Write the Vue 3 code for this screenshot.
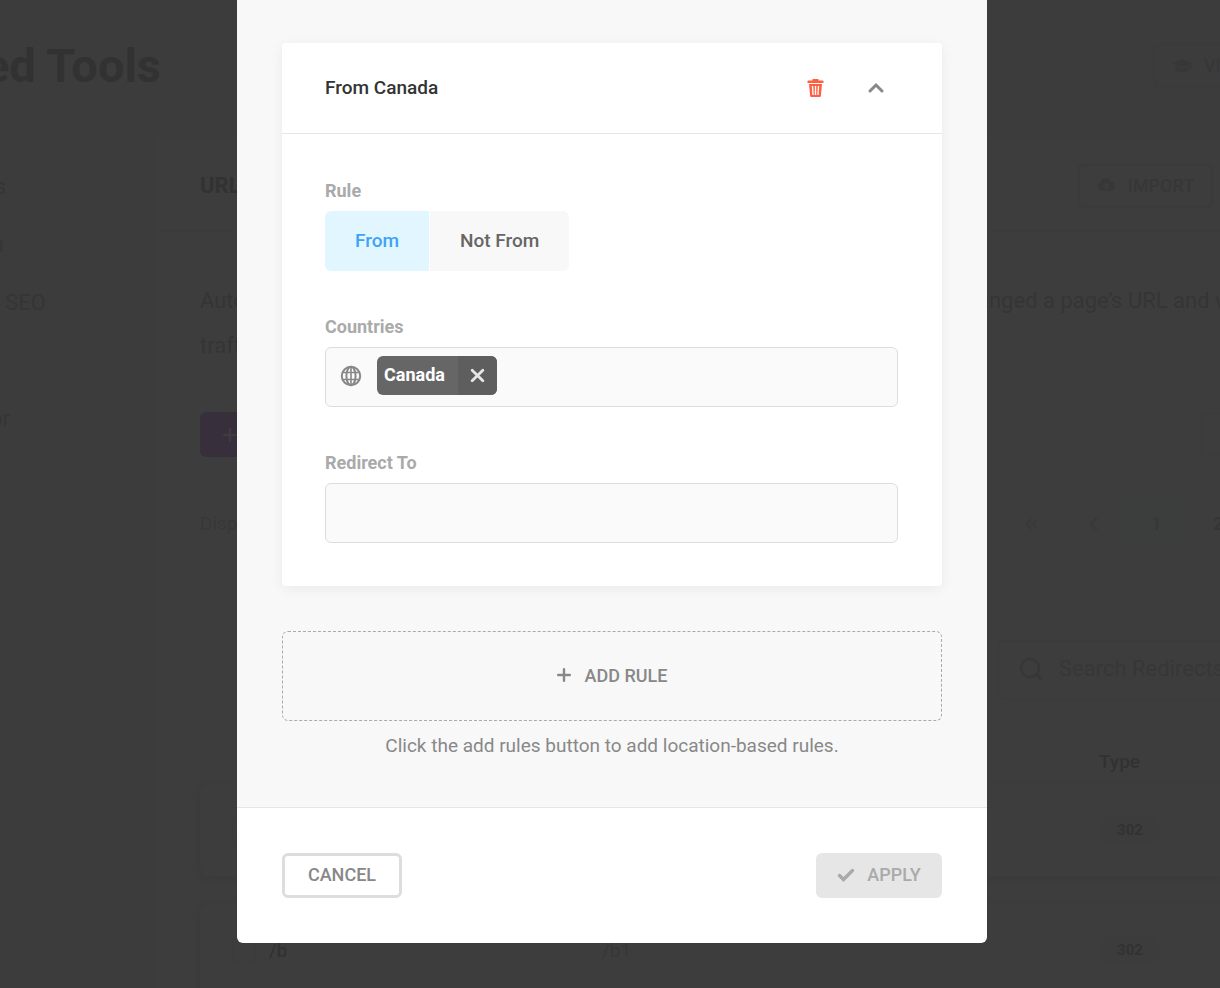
<script setup>
import { ref } from 'vue'

const rule = ref('from')
const redirectTo = ref('')
const countries = ref(['Canada'])

const navItems = [
  { text: 's', visible: 6 },
  { text: 'n', visible: 4 },
  { text: 'SEO', visible: 46 },
  { text: '', visible: 0 },
  { text: 'or', visible: 10 },
]

const rows = [
  { from: '', to: '', type: '302' },
  { from: '/b', to: '/b1', type: '302' },
]

function removeCountry(name) {
  countries.value = countries.value.filter((c) => c !== name)
}
</script>

<template>
  <div class="stage">
    <div class="page" aria-hidden="true">
      <header class="page-head">
        <h1 class="page-title"><span>ed Tools</span></h1>
        <button class="ghost video" type="button" tabindex="-1">
          <svg width="20" height="16" viewBox="0 0 20 16"><path d="M10 1 0.500 5.200 10 9.500l7.500-3.400V11h1.700V5.200zM3.500 8v3.500C5 13.500 7.300 14.300 10 14.300s5-.8 6.200-2.800V8L10 10.900z" fill="currentColor"/></svg>
          <span>VI</span>
        </button>
      </header>
      <div class="page-cols">
        <ul class="side">
          <li v-for="(item, i) in navItems" :key="i" :style="{ width: item.visible + 'px' }">{{ item.text }}</li>
        </ul>
        <section class="panel">
          <div class="panel-head">
            <h2>URL</h2>
            <button class="ghost import" type="button" tabindex="-1">
              <svg width="19" height="14" viewBox="0 0 19 14"><path fill-rule="evenodd" d="M4.500 12.500A4 4 0 0 1 3.300 4.700 5.500 5.500 0 0 1 13.800 3.500 4.600 4.600 0 0 1 14.500 12.500zM9.500 4.500 5.700 8.500h2.300v3h3v-3h2.300z" fill="currentColor"/></svg>
              <span>IMPORT</span>
            </button>
          </div>
          <div class="intro">
            <p>Auto<br />traff</p>
            <p class="intro-end">anged a page’s URL and w</p>
          </div>
          <div class="actions">
            <button class="add" type="button" tabindex="-1">
              <svg width="14" height="14" viewBox="0 0 14 14"><path d="M7 1v12M1 7h12" stroke="currentColor" stroke-width="2.500" stroke-linecap="round"/></svg>
            </button>
            <span class="stub"></span>
          </div>
          <div class="paging">
            <span class="display">Disp</span>
            <div class="pager">
              <span class="dim"><svg width="14" height="14" viewBox="0 0 14 14"><path d="M6.500 2 1.500 7l5 5M12.500 2l-5 5 5 5" fill="none" stroke="currentColor" stroke-width="2"/></svg></span>
              <span class="dim"><svg width="14" height="14" viewBox="0 0 14 14"><path d="M10 1 4 7l6 6" fill="none" stroke="currentColor" stroke-width="2"/></svg></span>
              <span class="current">1</span>
              <span>2</span>
            </div>
          </div>
          <div class="search">
            <svg width="24" height="24" viewBox="0 0 24 24"><circle cx="11" cy="11" r="9" fill="none" stroke="currentColor" stroke-width="2.500"/><path d="m17 17 5.500 5.500" stroke="currentColor" stroke-width="3"/></svg>
            <span>Search Redirects</span>
          </div>
          <div class="list-head">Type</div>
          <div v-for="(row, i) in rows" :key="i" class="list-row">
            <i class="tick"></i>
            <span class="path">{{ row.from }}</span>
            <span class="dest">{{ row.to }}</span>
            <b class="badge">{{ row.type }}</b>
          </div>
        </section>
      </div>
    </div>

    <div class="layer">
      <div class="modal" role="dialog" aria-modal="true" aria-label="Location rules">
        <div class="modal-body">
          <section class="card">
            <header class="card-head">
              <h3>From Canada</h3>
              <button class="icon-btn trash" type="button" aria-label="Delete rule">
                <svg width="17" height="20" viewBox="0 0 17 20"><path fill-rule="evenodd" d="M5.500 1h6v1.500h4.200q.8 0 .8.800V5H.5V3.300q0-.8.800-.8h4.200zM2 6h13l-1.200 12.200q-.1.800-.9.800H4.100q-.8 0-.9-.8zM4.800 8l.6 9h1.300l-.5-9zm3 0v9h1.400V8zm3 0-.5 9h1.300l.6-9z" fill="currentColor"/></svg>
              </button>
              <button class="icon-btn" type="button" aria-label="Collapse rule">
                <svg width="18" height="12" viewBox="0 0 18 12"><path d="m3 9 6-6 6 6" fill="none" stroke="currentColor" stroke-width="3" stroke-linecap="round" stroke-linejoin="miter"/></svg>
              </button>
            </header>
            <div class="card-body">
              <div class="field" role="group" aria-labelledby="rule-label">
                <span id="rule-label" class="label">Rule</span>
                <div class="tabs">
                  <button type="button" :class="{ active: rule === 'from' }" :aria-pressed="rule === 'from'" @click="rule = 'from'">From</button>
                  <button type="button" :class="{ active: rule === 'not' }" :aria-pressed="rule === 'not'" @click="rule = 'not'">Not From</button>
                </div>
              </div>
              <div class="field">
                <label class="label" for="countries">Countries</label>
                <div class="box multi">
                  <svg class="globe" width="22" height="22" viewBox="0 0 22 22" fill="none" stroke="currentColor" stroke-width="2"><circle cx="11" cy="11" r="9.200"/><ellipse cx="11" cy="11" rx="4.600" ry="9.200"/><path d="M11 1.700v18.600M2.500 7.500h17M2.500 14.500h17" stroke-width="1.600"/></svg>
                  <span v-for="name in countries" :key="name" class="chip">
                    <span class="chip-name">{{ name }}</span>
                    <button type="button" :aria-label="'Remove ' + name" @click="removeCountry(name)">
                      <svg width="15" height="15" viewBox="0 0 14 14"><path d="m2 2 10 10M12 2 2 12" stroke="currentColor" stroke-width="2.600" stroke-linecap="round"/></svg>
                    </button>
                  </span>
                  <input id="countries" type="text" />
                </div>
              </div>
              <div class="field">
                <label class="label" for="redirect">Redirect To</label>
                <input id="redirect" v-model="redirectTo" class="box" type="text" />
              </div>
            </div>
          </section>
          <button class="add-rule" type="button">
            <svg width="14" height="14" viewBox="0 0 14 14"><path d="M7 1.200v11.600M1.200 7h11.600" stroke="currentColor" stroke-width="2.400" stroke-linecap="round"/></svg>
            <span>ADD RULE</span>
          </button>
          <p class="hint">Click the add rules button to add location-based rules.</p>
        </div>
        <footer class="modal-foot">
          <button class="cancel" type="button">CANCEL</button>
          <button class="apply" type="button" disabled>
            <svg width="18" height="14" viewBox="0 0 18 14"><path d="m2.500 7.500 4 4 9-9" fill="none" stroke="currentColor" stroke-width="3.400" stroke-linecap="round"/></svg>
            <span>APPLY</span>
          </button>
        </footer>
      </div>
    </div>
  </div>
</template>

<style>
body {
  background: #3c3c3c;
}
</style>

<style scoped>
* {
  box-sizing: border-box;
}
.stage {
  position: relative;
  height: 100vh;
  overflow: hidden;
  background: #3c3c3c;
  font-family: Roboto, "Liberation Sans", sans-serif;
  font-size: 19px;
}
button,
input {
  font: inherit;
}
button {
  display: flex;
  align-items: center;
  justify-content: center;
  padding: 0;
  border: 0;
  background: none;
  cursor: pointer;
}
svg {
  flex: none;
  display: block;
}
h1,
h2,
h3,
p,
ul {
  margin: 0;
  padding: 0;
}

/* dimmed page */
.page {
  color: #353535;
}
.page-head {
  display: flex;
  align-items: center;
  height: 139px;
  padding-bottom: 8px;
}
.page-title {
  display: flex;
  justify-content: flex-end;
  width: 161px;
  overflow: hidden;
  color: #323232;
  font-size: 47px;
  font-weight: 700;
  white-space: nowrap;
}
.ghost {
  gap: 12px;
  height: 45px;
  border: 3px solid #3b3b3b;
  border-radius: 6px;
  color: #373737;
  font-size: 18px;
  font-weight: 500;
}
.video {
  justify-content: flex-start;
  width: 67px;
  margin-left: auto;
  padding-left: 16px;
  border-right: 0;
  border-radius: 6px 0 0 6px;
  overflow: hidden;
}
.page-cols {
  display: flex;
}
.side {
  flex: none;
  width: 155px;
  padding-top: 19px;
  list-style: none;
  font-size: 22px;
}
.side li {
  display: flex;
  justify-content: flex-end;
  height: 58px;
  line-height: 58px;
  overflow: hidden;
}
.panel {
  flex: 1;
  min-width: 0;
  padding-left: 45px;
  background: #3d3d3d;
}
.panel-head {
  display: flex;
  align-items: center;
  height: 93px;
  margin-left: -45px;
  padding: 0 6px 0 45px;
  border-bottom: 1px solid #3b3b3b;
}
.panel-head h2 {
  color: #323232;
  font-size: 22px;
  font-weight: 700;
}
.import {
  width: 137px;
  margin-left: auto;
}
.intro {
  display: flex;
  justify-content: space-between;
  padding-top: 46px;
  font-size: 22px;
  line-height: 45px;
  white-space: nowrap;
}
.intro-end {
  display: flex;
  width: 243px;
  overflow: hidden;
}
.actions {
  display: flex;
  justify-content: space-between;
  margin-top: 44px;
}
.add {
  justify-content: flex-start;
  width: 180px;
  height: 45px;
  padding-left: 23px;
  border-radius: 6px;
  background: #382f3c;
  color: #3f3b41;
}
.stub {
  width: 20px;
  border: 3px solid #3c3c3c;
  border-right: 0;
  border-radius: 6px 0 0 6px;
}
.paging {
  display: flex;
  align-items: center;
  justify-content: space-between;
  margin-top: 44px;
}
.display {
  color: #383838;
}
.pager {
  display: flex;
  width: 219px;
  overflow: hidden;
  font-size: 18px;
  font-weight: 500;
}
.pager span {
  display: flex;
  flex: none;
  align-items: center;
  justify-content: center;
  width: 62px;
  height: 45px;
}
.pager .dim {
  color: #393939;
}
.pager .current {
  background: #3c3e3d;
  color: #35373a;
}
.search {
  display: flex;
  align-items: center;
  gap: 16px;
  width: 222px;
  height: 60px;
  margin: 94px 0 0 auto;
  padding: 0 0 3px 20px;
  border: 1px solid #3b3b3b;
  border-right: 0;
  border-radius: 6px 0 0 6px;
  color: #373737;
  font-size: 22px;
  white-space: nowrap;
  overflow: hidden;
}
.list-head {
  height: 83px;
  padding: 51px 80px 0 0;
  color: #323232;
  font-weight: 500;
  line-height: 22px;
  text-align: right;
}
.list-row {
  display: flex;
  align-items: center;
  height: 93px;
  margin-bottom: 27px;
  padding: 0 60px 0 31px;
  border-top: 1px solid #3c3c3c;
  border-left: 1px solid #3c3c3c;
  border-radius: 6px 0 0 6px;
  box-shadow: 0 3px 4px #3b3b3b;
}
.tick {
  flex: none;
  width: 24px;
  height: 24px;
  border: 1px solid #3b3b3b;
  border-radius: 4px;
}
.path {
  width: 346px;
  padding-left: 13px;
  color: #323232;
  font-weight: 500;
}
.dest {
  color: #373737;
}
.badge {
  margin-left: auto;
  width: 60px;
  border-radius: 15px;
  background: #3c3c3c;
  color: #323232;
  font-size: 15px;
  line-height: 30px;
  text-align: center;
}

/* dialog */
.layer {
  position: absolute;
  inset: 0;
  display: flex;
  align-items: flex-start;
  justify-content: center;
  padding-left: 4px;
}
.modal {
  width: 100%;
  max-width: 750px;
  border-radius: 0 0 6px 6px;
  background: #fff;
  overflow: hidden;
}
.modal-body {
  padding: 43px 45px 46px;
  border-bottom: 1px solid #e6e6e6;
  background: #f8f8f8;
}
.card {
  border-radius: 4px;
  background: #fff;
  box-shadow: 0 3px 14px rgba(0, 0, 0, 0.06);
}
.card-head {
  display: flex;
  align-items: center;
  height: 91px;
  padding: 0 46px 1px 43px;
  border-bottom: 1px solid #e6e6e6;
}
.card-head h3 {
  margin-right: auto;
  color: #333;
  font-size: 19px;
  font-weight: 500;
}
.icon-btn {
  width: 40px;
  height: 40px;
  color: #888;
}
.trash {
  margin-right: 21px;
  color: #ff5f40;
}
.card-body {
  display: flex;
  flex-direction: column;
  gap: 46px;
  padding: 47px 44px 43px 43px;
}
.field {
  display: flex;
  flex-direction: column;
  gap: 10px;
}
.label {
  color: #aaa;
  font-size: 18px;
  font-weight: 700;
  line-height: 20px;
}
.tabs {
  display: flex;
  align-self: flex-start;
  gap: 1px;
  border-radius: 6px;
  overflow: hidden;
}
.tabs button {
  height: 60px;
  padding: 0 30px 2px;
  background: #f8f8f8;
  color: #666;
  font-weight: 500;
}
.tabs .active {
  background: #e1f6ff;
  color: #3fa3f5;
}
.box {
  display: flex;
  align-items: center;
  width: 100%;
  height: 60px;
  padding: 0 14px;
  border: 1px solid #ddd;
  border-radius: 6px;
  background: #fafafa;
  color: #333;
}
.multi {
  padding-bottom: 3px;
}
.box input {
  flex: 1;
  min-width: 0;
  border: 0;
  background: none;
  outline: 0;
}
.globe {
  margin-right: 15px;
  color: #888;
}
.chip {
  display: flex;
  height: 39px;
  border-radius: 6px;
  background: #666;
  color: #fff;
  overflow: hidden;
}
.chip-name {
  padding: 0 13px 0 7px;
  font-size: 18px;
  font-weight: 700;
  line-height: 38px;
}
.chip button {
  width: 39px;
  background: #5e5e5e;
  color: #e6e6e6;
}
.add-rule {
  gap: 14px;
  width: 100%;
  height: 90px;
  margin-top: 45px;
  padding-bottom: 2px;
  border: 1px dashed #aaa;
  border-radius: 6px;
  color: #888;
  font-size: 18px;
  font-weight: 500;
}
.hint {
  margin-top: 10px;
  color: #888;
  line-height: 30px;
  text-align: center;
}
.modal-foot {
  display: flex;
  justify-content: space-between;
  padding: 45px;
}
.modal-foot button {
  height: 45px;
  padding-bottom: 2px;
  border-radius: 6px;
  font-size: 18px;
  font-weight: 500;
}
.modal-foot .cancel {
  width: 120px;
  border: 3px solid #ddd;
  color: #888;
}
.modal-foot .apply {
  gap: 12px;
  width: 126px;
  background: #e6e6e6;
  color: #aaa;
}
</style>
